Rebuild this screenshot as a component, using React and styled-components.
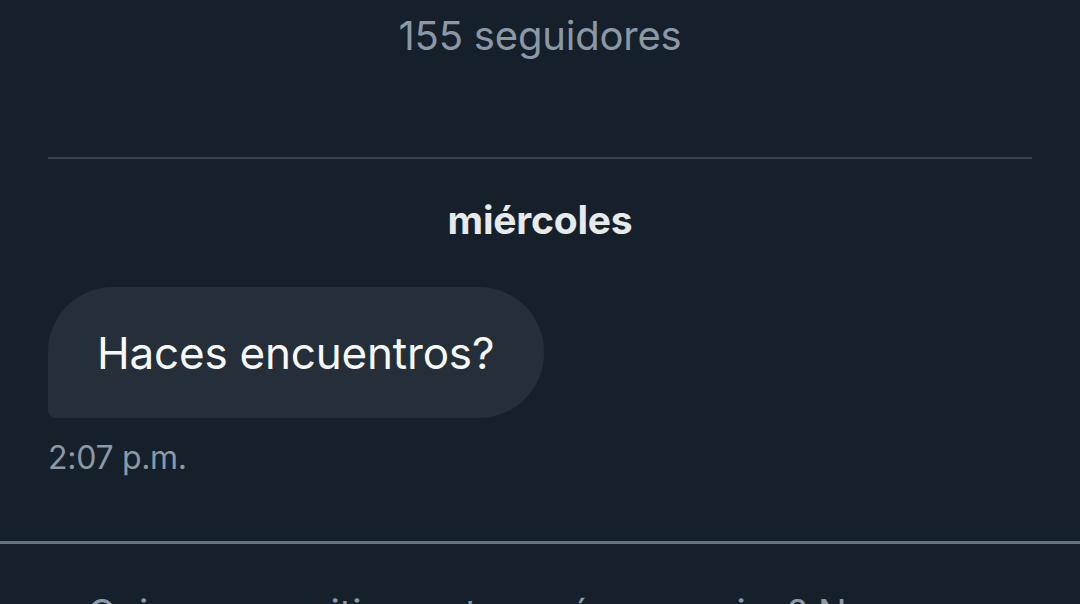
import React from "react";
import styled, { createGlobalStyle } from "styled-components";

const GlobalStyle = createGlobalStyle`
  html, body {
    margin: 0;
    padding: 0;
    background: #15202b;
    font-family: Inter, "Noto Sans", sans-serif;
  }
`;

const Screen = styled.div`
  width: 1080px;
  height: 604px;
  overflow: hidden;
  background: #15202b;
  display: flex;
  flex-direction: column;
`;

const Profile = styled.div`
  padding: 0 48px;
  display: flex;
  flex-direction: column;
  align-items: center;
`;

const Followers = styled.div`
  margin-top: 10px;
  font-size: 40px;
  line-height: 52px;
  color: #8b98a5;
  letter-spacing: -0.2px;
`;

const Divider = styled.div`
  align-self: stretch;
  height: 2px;
  margin-top: 95px;
  background: #38444d;
`;

const Thread = styled.div`
  padding: 0 48px;
  display: flex;
  flex-direction: column;
`;

const DayLabel = styled.div`
  margin-top: 37px;
  text-align: center;
  font-size: 39px;
  line-height: 48px;
  font-weight: 700;
  color: #e7e9ea;
  letter-spacing: -0.2px;
`;

const Bubble = styled.div`
  align-self: flex-start;
  margin-top: 43px;
  height: 131px;
  box-sizing: border-box;
  padding: 0 50px 0 49px;
  display: flex;
  align-items: center;
  background: #252f39;
  border-radius: 65px 65px 65px 8px;
  font-size: 44px;
  color: #f7f9f9;
  letter-spacing: -0.2px;
`;

const Stamp = styled.div`
  margin-top: 20px;
  font-size: 32px;
  line-height: 40px;
  color: #8b98a5;
  letter-spacing: -0.3px;
`;

const Footer = styled.div`
  margin-top: 63px;
  border-top: 3px solid #66757f;
  padding: 45px 68px 0;
  font-size: 38px;
  line-height: 48px;
  color: #8b98a5;
  white-space: nowrap;
`;

export default function App() {
  return (
    <>
      <GlobalStyle />
      <Screen>
        <Profile>
          <Followers>155 seguidores</Followers>
          <Divider />
        </Profile>
        <Thread>
          <DayLabel>miércoles</DayLabel>
          <Bubble>Haces encuentros?</Bubble>
          <Stamp>2:07 p.m.</Stamp>
        </Thread>
        <Footer>¿Quieres permitir que te envíe mensajes? No</Footer>
      </Screen>
    </>
  );
}
